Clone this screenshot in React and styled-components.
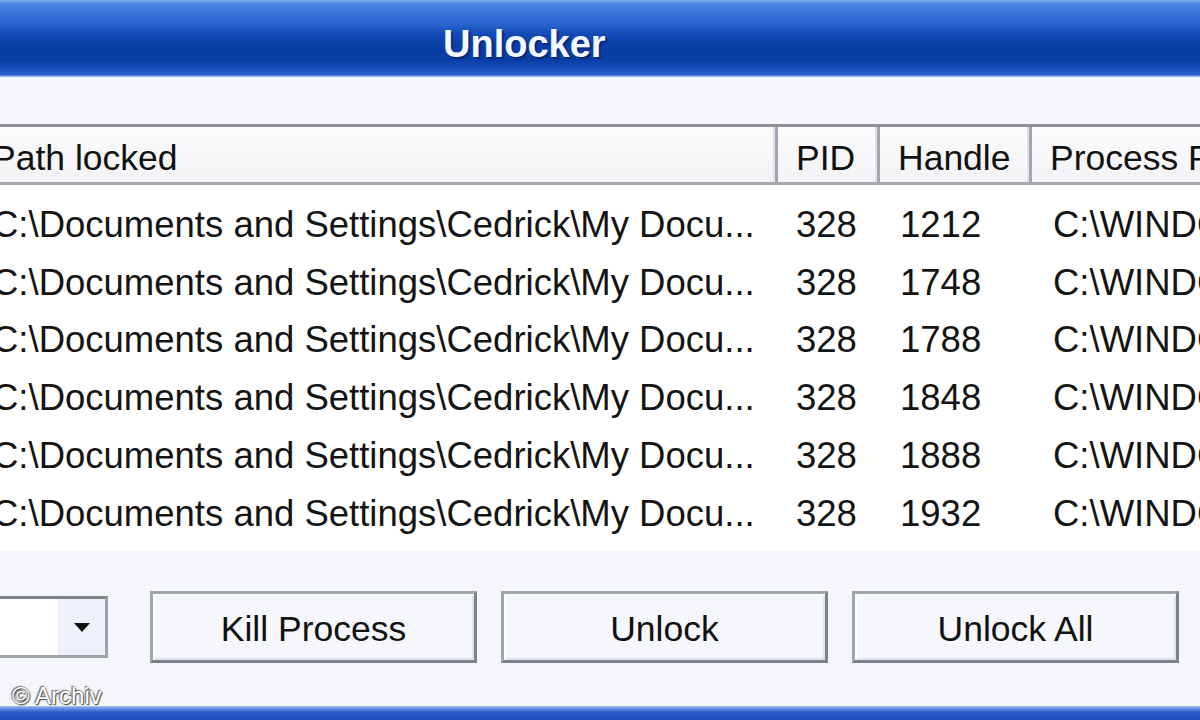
import React from "react";
import styled, { createGlobalStyle } from "styled-components";

const GlobalStyle = createGlobalStyle`
  html, body { margin: 0; padding: 0; overflow: hidden; background: #f4f6fb; }
  #root { width: 1200px; height: 720px; overflow: hidden; }
`;

const Window = styled.div`
  position: relative;
  width: 1260px;
  height: 720px;
  margin-left: -29px;
  display: flex;
  flex-direction: column;
  font-family: "Liberation Sans", Arial, sans-serif;
  color: #111;
`;

const TitleBar = styled.div`
  height: 77px;
  flex: none;
  box-sizing: border-box;
  display: flex;
  align-items: center;
  padding-left: 472px;
  padding-top: 12px;
  background: linear-gradient(
    to bottom,
    #86adec 0%,
    #4c86e2 5%,
    #3472d8 18%,
    #2862cc 32%,
    #1448b4 45%,
    #0a3ea6 58%,
    #0a3da4 78%,
    #1a4fbc 90%,
    #2b5ec8 97%,
    #b8cdf0 100%
  );
`;

const Title = styled.div`
  font-family: "Liberation Sans", Arial, sans-serif;
  font-weight: bold;
  font-size: 38px;
  color: #f4f8ff;
  text-shadow: 2px 2px 1px #0a2a78;
`;

const Body = styled.div`
  flex: 1;
  display: flex;
  flex-direction: column;
  background: #f4f6fb;
  padding-top: 47px;
`;

const ListView = styled.div`
  height: 427px;
  flex: none;
  background: #ffffff;
  border-top: 3px solid #8e9096;
  border-left: 3px solid #8e9096;
  box-sizing: border-box;
  display: flex;
  flex-direction: column;
`;

const cols = "804px 102px 152px 1fr";

const HeaderRow = styled.div`
  display: grid;
  grid-template-columns: ${cols};
  height: 55px;
  background: linear-gradient(to bottom, #fbfbfd, #f3f3f5);
  border-bottom: 3px solid #a7a9ae;
`;

const HeaderCell = styled.div`
  display: flex;
  align-items: center;
  padding-left: ${(p) => p.$pad || 18}px;
  padding-top: 8px;
  font-size: 35.5px;
  white-space: nowrap;
  overflow: hidden;
  border-right: 3px solid #a3a5aa;
  box-shadow: inset -2px 0 0 #e2e3e6;
  box-sizing: border-box;
`;

const Rows = styled.div`
  padding-top: 11px;
`;

const Row = styled.div`
  display: grid;
  grid-template-columns: ${cols};
  height: 57.8px;
  align-items: center;
`;

const Cell = styled.div`
  padding-left: ${(p) => p.$pad || 18}px;
  font-size: 36.5px;
  white-space: nowrap;
  overflow: hidden;
  color: #141414;
`;

const ButtonBar = styled.div`
  margin-top: 40px;
  display: flex;
  align-items: center;
  gap: 24px;
`;

const Combo = styled.div`
  width: 137px;
  height: 62px;
  flex: none;
  box-sizing: border-box;
  margin-right: 18px;
  display: flex;
  justify-content: flex-end;
  background: #ffffff;
  border: 3px solid #9da1a8;
  border-top-color: #7f838a;
  border-left: none;
`;

const ComboArrow = styled.div`
  width: 46px;
  display: flex;
  align-items: center;
  justify-content: center;
  background: #eef1f7;
  border-left: 1px solid #e4e7ee;
`;

const Button = styled.div`
  width: 327px;
  height: 72px;
  flex: none;
  box-sizing: border-box;
  display: flex;
  align-items: center;
  justify-content: center;
  background: #f5f7fc;
  border: 3px solid #a1a5ad;
  border-right-color: #7d8189;
  border-bottom-color: #7d8189;
  box-shadow: inset 2px 2px 0 #ffffff, inset -2px -2px 0 #dfe2e9;
  font-size: 35.5px;
  color: #111;
  padding-top: 4px;
`;

const BottomFrame = styled.div`
  margin-top: auto;
  height: 14px;
  background: linear-gradient(to bottom, #a9c2ee 0%, #5d8ce0 20%, #2a5bc6 45%, #1e4fb8 100%);
`;

const Watermark = styled.div`
  position: absolute;
  left: 41px;
  top: 682px;
  font-family: "Liberation Sans", Arial, sans-serif;
  font-size: 24px;
  color: #ffffff;
  text-shadow: 0 0 2px #555, 1px 1px 1px #444, -1px -1px 1px #777;
`;

const rows = ["1212", "1748", "1788", "1848", "1888", "1932"];

export default function App() {
  return (
    <>
      <GlobalStyle />
      <Window>
        <TitleBar>
          <Title>Unlocker</Title>
        </TitleBar>
        <Body>
          <ListView>
            <HeaderRow>
              <HeaderCell>Path locked</HeaderCell>
              <HeaderCell>PID</HeaderCell>
              <HeaderCell>Handle</HeaderCell>
              <HeaderCell>Process Path</HeaderCell>
            </HeaderRow>
            <Rows>
              {rows.map((h) => (
                <Row key={h}>
                  <Cell>C:\Documents and Settings\Cedrick\My Docu...</Cell>
                  <Cell>328</Cell>
                  <Cell $pad={20}>{h}</Cell>
                  <Cell $pad={21}>C:\WINDOWS\explorer.exe</Cell>
                </Row>
              ))}
            </Rows>
          </ListView>
          <ButtonBar>
            <Combo>
              <ComboArrow>
                <svg width="16" height="9" viewBox="0 0 16 9">
                  <path d="M0 0 H16 L8 9 Z" fill="#111" />
                </svg>
              </ComboArrow>
            </Combo>
            <Button>Kill Process</Button>
            <Button>Unlock</Button>
            <Button>Unlock All</Button>
            <Button>Cancel</Button>
          </ButtonBar>
          <BottomFrame />
        </Body>
        <Watermark>© Archiv</Watermark>
      </Window>
    </>
  );
}
